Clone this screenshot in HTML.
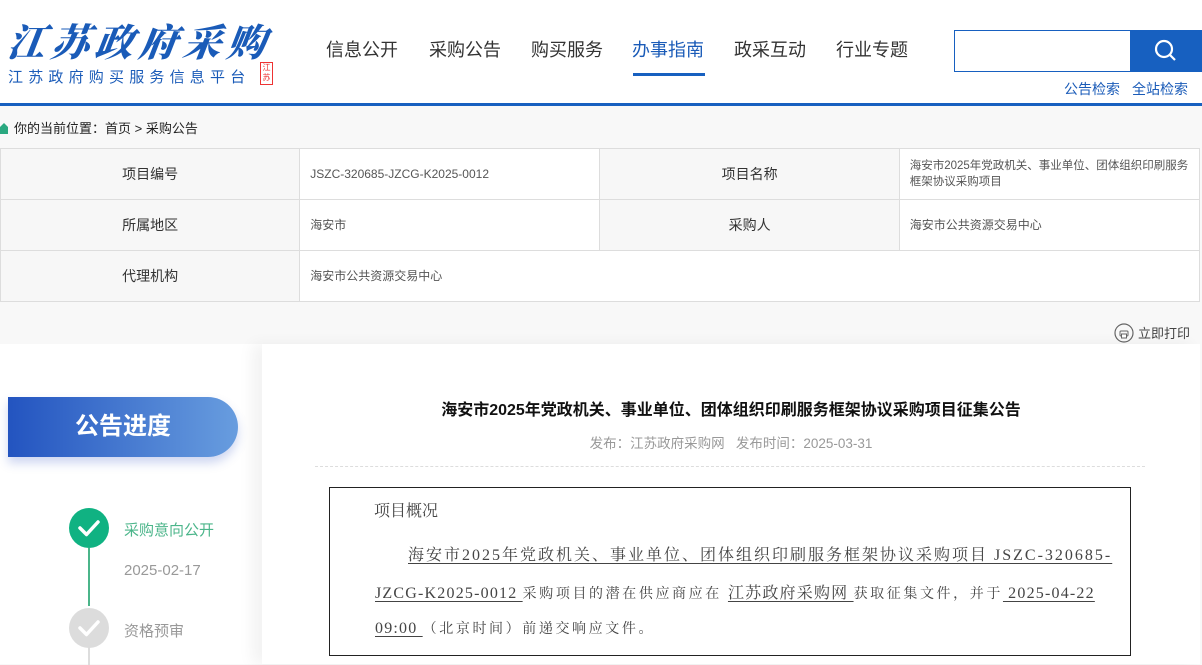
<!DOCTYPE html>
<html><head><meta charset="utf-8">
<style>
*{margin:0;padding:0;box-sizing:border-box}
body{width:1202px;height:664px;overflow:hidden;background:#f8f8f8;font-family:"Liberation Sans","Noto Sans CJK SC",sans-serif;position:relative;color:#333}
.abs{position:absolute}
#hdr{left:0;top:0;width:1202px;height:106px;background:#fff;border-bottom:3px solid #1760c0}
.logo{left:8px;top:12px;font-family:"Liberation Serif","Noto Serif CJK SC",serif;font-weight:900;font-style:italic;font-size:38px;color:#1a5bb8;letter-spacing:6px;transform:skewX(-8deg)}
.sub{left:8px;top:66px;font-size:15px;color:#1a5bb8;letter-spacing:5.2px}
.seal{left:260px;top:62px;width:13px;height:23px;border:1px solid #e33;color:#e33;font-size:8px;line-height:10px;text-align:center}
.nav{top:36px;font-size:18px;color:#333}
.nav.act{color:#1a5bb8}
.uline{left:633px;top:73px;width:72px;height:3px;background:#1760c0}
.sbox{left:954px;top:30px;width:176px;height:42px;border:1px solid #1760c0;border-right:none;background:#fff}
.sbtn{left:1130px;top:30px;width:72px;height:42px;background:#1760c0}
.slinks{top:79px;font-size:14px;color:#1a5bb8}
.crumb{left:14px;top:118px;font-size:13px;color:#222}
table{position:absolute;left:0;top:148px;width:1200px;border-collapse:collapse;font-size:13px}
td{border:1px solid #ddd;height:51px;padding:0 10px}
td.l{background:#f7f7f7;text-align:center;color:#333;font-size:14px;width:299px}
td.v{background:#fff;color:#555;font-size:12px;width:300px;line-height:16px}
.print{left:1114px;top:323px;font-size:13px;color:#444}
#left{left:0;top:344px;width:262px;height:320px;background:#fff}
#main{left:262px;top:344px;width:938px;height:320px;background:#fff;box-shadow:-10px 0 14px rgba(0,0,0,0.05)}
.pill{left:8px;top:397px;width:230px;height:60px;border-radius:0 30px 30px 0;background:linear-gradient(90deg,#2354c0,#689ddf);color:#fff;font-weight:bold;font-size:24px;line-height:60px;padding-left:67px;box-shadow:0 6px 10px rgba(60,90,200,0.25)}
.circ{width:40px;height:40px;border-radius:50%}
.title{left:262px;width:938px;top:396px;text-align:center;font-weight:bold;font-size:16px;color:#111}
.meta{left:262px;width:938px;top:432px;text-align:center;font-size:13.5px;color:#999}
.dash{left:315px;top:466px;width:830px;border-top:1px dashed #ddd}
.box{left:329px;top:487px;width:802px;height:169px;border:1px solid #222;font-family:"Liberation Serif","Noto Serif CJK SC",serif;color:#444}
.box u{text-underline-offset:3px}
.ln{position:absolute;white-space:nowrap;font-size:16px;color:#444}
.sm{font-size:14px;letter-spacing:1.5px}
</style></head><body>
<div id="hdr" class="abs"></div>
<div class="abs logo">江苏政府采购</div>
<div class="abs sub">江苏政府购买服务信息平台</div>
<div class="abs seal">江<br>苏</div>
<div class="abs nav" style="left:326px">信息公开</div>
<div class="abs nav" style="left:429px">采购公告</div>
<div class="abs nav" style="left:531px">购买服务</div>
<div class="abs nav act" style="left:632px">办事指南</div>
<div class="abs nav" style="left:734px">政采互动</div>
<div class="abs nav" style="left:836px">行业专题</div>
<div class="abs uline"></div>
<div class="abs sbox"></div>
<div class="abs sbtn"><svg width="72" height="42"><circle cx="34" cy="19" r="8" fill="none" stroke="#fff" stroke-width="2.2"/><line x1="40" y1="25" x2="45" y2="30" stroke="#fff" stroke-width="2.2"/></svg></div>
<div class="abs slinks" style="left:1064px">公告检索</div>
<div class="abs slinks" style="left:1132px">全站检索</div>
<svg class="abs" style="left:0;top:122px" width="8" height="12"><path d="M0 5 L4 1 L8 5 V12 H0Z" fill="#2aa880"/></svg>
<div class="abs crumb">你的当前位置：首页 &gt; 采购公告</div>
<table>
<tr><td class="l">项目编号</td><td class="v">JSZC-320685-JZCG-K2025-0012</td><td class="l">项目名称</td><td class="v" style="font-size:11.5px">海安市2025年党政机关、事业单位、团体组织印刷服务框架协议采购项目</td></tr>
<tr><td class="l">所属地区</td><td class="v">海安市</td><td class="l">采购人</td><td class="v">海安市公共资源交易中心</td></tr>
<tr><td class="l">代理机构</td><td class="v" colspan="3">海安市公共资源交易中心</td></tr>
</table>
<div class="abs print"><svg width="20" height="20" style="vertical-align:-5px;margin-right:4px"><circle cx="10" cy="10" r="9" fill="none" stroke="#666" stroke-width="1.2"/><rect x="6" y="8" width="8" height="5" rx="1" fill="none" stroke="#666"/><rect x="7.5" y="11" width="5" height="4" fill="#fff" stroke="#666"/></svg>立即打印</div>
<div id="left" class="abs"></div>
<div id="main" class="abs"></div>
<div class="abs pill">公告进度</div>
<div class="abs" style="left:88px;top:548px;width:2px;height:58px;background:#4bb58a"></div>
<div class="abs" style="left:88px;top:645px;width:2px;height:20px;background:#ddd"></div>
<div class="abs circ" style="left:69px;top:508px;background:#10b282"><svg width="40" height="40"><path d="M11 20 L17.5 26.5 L29 14" fill="none" stroke="#fff" stroke-width="3.5" stroke-linecap="round" stroke-linejoin="round"/></svg></div>
<div class="abs circ" style="left:69px;top:608px;background:#dcdcdc"><svg width="40" height="40"><path d="M11 20 L17.5 26.5 L29 14" fill="none" stroke="#fff" stroke-width="3.5" stroke-linecap="round" stroke-linejoin="round"/></svg></div>
<div class="abs" style="left:124px;top:519px;font-size:15px;color:#4bb58a">采购意向公开</div>
<div class="abs" style="left:124px;top:562px;font-size:15px;color:#999">2025-02-17</div>
<div class="abs" style="left:124px;top:620px;font-size:15px;color:#999">资格预审</div>
<div class="abs title">海安市2025年党政机关、事业单位、团体组织印刷服务框架协议采购项目征集公告</div>
<div class="abs meta">发布：江苏政府采购网&nbsp;&nbsp;&nbsp;发布时间：2025-03-31</div>
<div class="abs dash"></div>
<div class="abs box">
<div class="ln" style="left:44px;top:10px">项目概况</div>
<div class="ln" style="left:78px;top:54px;letter-spacing:2px"><u>海安市2025年党政机关、事业单位、团体组织印刷服务框架协议采购项目 JSZC-320685-</u></div>
<div class="ln" style="left:45px;top:92px;letter-spacing:1.2px"><u>JZCG-K2025-0012 </u><span class="sm" style="letter-spacing:2.6px">采购项目的潜在供应商应在 </span><u>江苏政府采购网 </u><span class="sm" style="letter-spacing:2.6px">获取征集文件，并于</span><u> 2025-04-22</u></div>
<div class="ln" style="left:45px;top:130px;letter-spacing:1.2px"><u>09:00 </u><span class="sm" style="letter-spacing:2.6px">（北京时间）前递交响应文件。</span></div>
</div>
</body></html>
